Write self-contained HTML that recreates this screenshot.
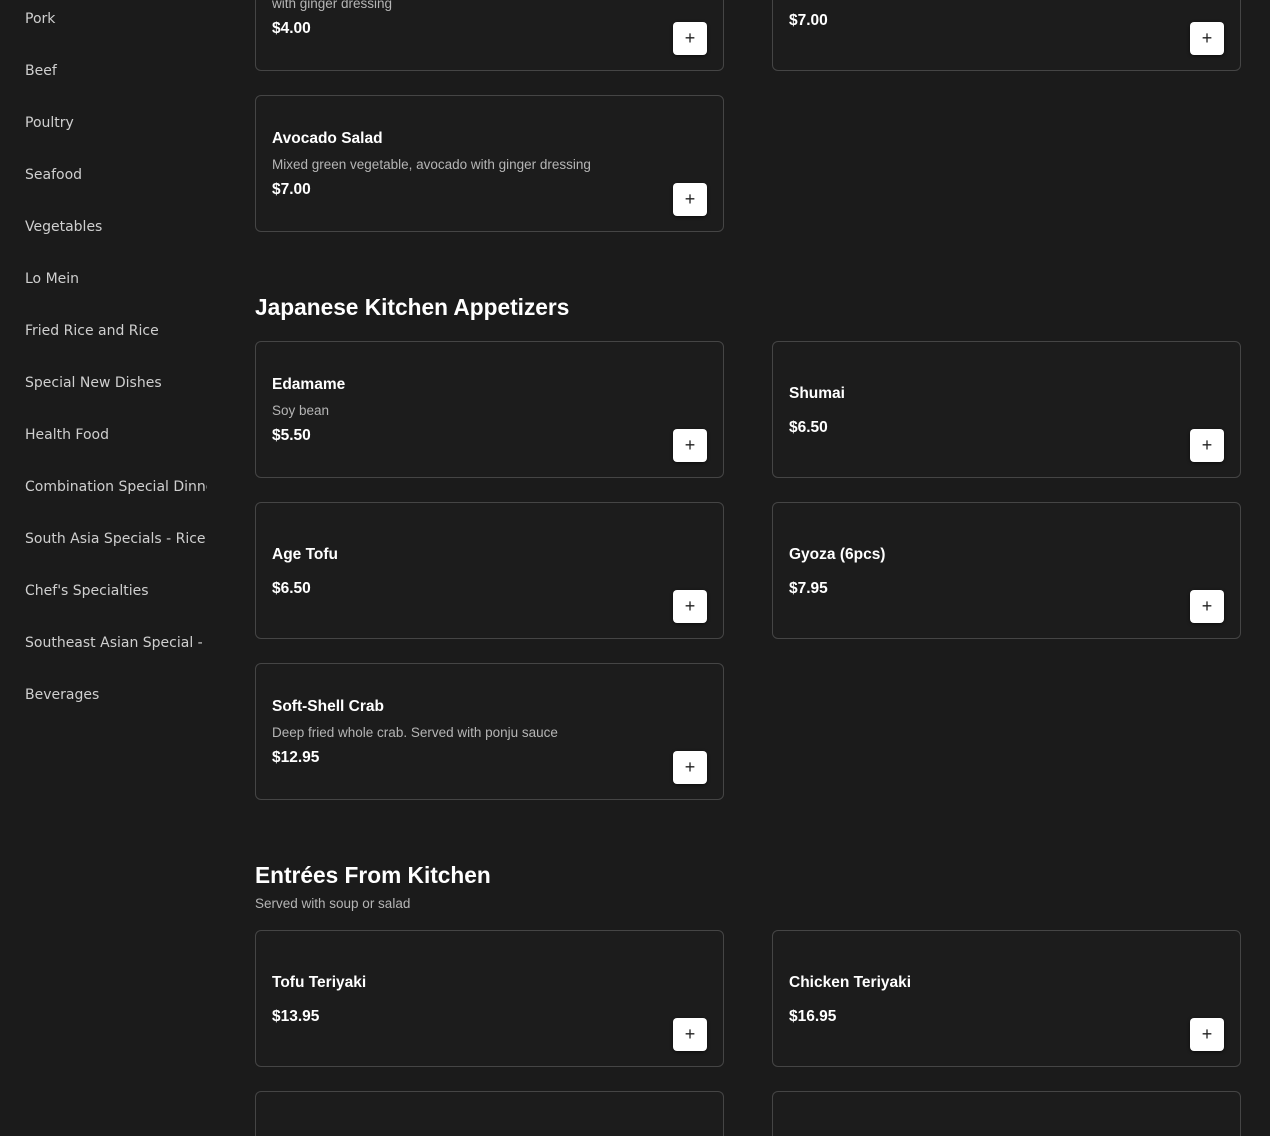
<!DOCTYPE html>
<html><head><meta charset="utf-8"><style>
*{margin:0;padding:0;box-sizing:border-box}
html,body{width:1270px;height:1136px;overflow:hidden;background:#1b1b1b;font-family:"Liberation Sans",sans-serif;color:#fff;position:relative}
.side{position:absolute;left:25px;width:182px;overflow:hidden;white-space:nowrap;font-family:"DejaVu Sans",sans-serif;font-size:14px;color:#cfcfcf;line-height:20px}
.card{position:absolute;width:469px;height:137px;border:1px solid #454545;border-radius:6px;background:#1c1c1c;display:flex;flex-direction:column;justify-content:center;padding:3px 16px 0}
.card.r{left:772px}.card.l{left:255px}
.t{font-weight:bold;font-size:15.5px;line-height:20px}
.d{font-size:13.5px;color:#b5b5b5;line-height:20px;margin-top:6px}
.p{font-weight:bold;font-size:15.5px;line-height:22px;margin-top:4px}
.p.n{margin-top:13px}
.b{position:absolute;right:16px;bottom:15px;width:34px;height:33px;background:#fff;border-radius:4px;box-shadow:0 1px 3px rgba(0,0,0,.6);color:#222;font-size:18px;line-height:33px;text-align:center}
h2{position:absolute;left:255px;font-size:22.7px;font-weight:bold;line-height:30px}
.sub{position:absolute;left:255px;font-size:13.5px;color:#b5b5b5;line-height:20px}
</style></head><body>
<div class="side" style="top:9px">Pork</div>
<div class="side" style="top:61px">Beef</div>
<div class="side" style="top:113px">Poultry</div>
<div class="side" style="top:165px">Seafood</div>
<div class="side" style="top:217px">Vegetables</div>
<div class="side" style="top:269px">Lo Mein</div>
<div class="side" style="top:321px">Fried Rice and Rice</div>
<div class="side" style="top:373px">Special New Dishes</div>
<div class="side" style="top:425px">Health Food</div>
<div class="side" style="top:477px">Combination Special Dinner</div>
<div class="side" style="top:529px">South Asia Specials - Rice</div>
<div class="side" style="top:581px">Chef's Specialties</div>
<div class="side" style="top:633px">Southeast Asian Special - </div>
<div class="side" style="top:685px">Beverages</div>

<div class="card l" style="top:-86px;height:157px"><div class="t">House Salad</div><div class="d">Mixed green vegetable<br>with ginger dressing</div><div class="p">$4.00</div><div class="b">+</div></div>
<div class="card r" style="top:-66px"><div class="t">Seaweed Salad</div><div class="p n">$7.00</div><div class="b">+</div></div>
<div class="card l" style="top:95px"><div class="t">Avocado Salad</div><div class="d">Mixed green vegetable, avocado with ginger dressing</div><div class="p">$7.00</div><div class="b">+</div></div>

<h2 style="top:292px">Japanese Kitchen Appetizers</h2>
<div class="card l" style="top:341px"><div class="t">Edamame</div><div class="d">Soy bean</div><div class="p">$5.50</div><div class="b">+</div></div>
<div class="card r" style="top:341px"><div class="t">Shumai</div><div class="p n">$6.50</div><div class="b">+</div></div>
<div class="card l" style="top:502px"><div class="t">Age Tofu</div><div class="p n">$6.50</div><div class="b">+</div></div>
<div class="card r" style="top:502px"><div class="t">Gyoza (6pcs)</div><div class="p n">$7.95</div><div class="b">+</div></div>
<div class="card l" style="top:663px"><div class="t">Soft-Shell Crab</div><div class="d">Deep fried whole crab. Served with ponju sauce</div><div class="p">$12.95</div><div class="b">+</div></div>

<h2 style="top:860px">Entrées From Kitchen</h2>
<div class="sub" style="top:894px">Served with soup or salad</div>
<div class="card l" style="top:930px"><div class="t">Tofu Teriyaki</div><div class="p n">$13.95</div><div class="b">+</div></div>
<div class="card r" style="top:930px"><div class="t">Chicken Teriyaki</div><div class="p n">$16.95</div><div class="b">+</div></div>
<div class="card l" style="top:1091px;height:60px;border-bottom:none;border-radius:6px 6px 0 0"></div>
<div class="card r" style="top:1091px;height:60px;border-bottom:none;border-radius:6px 6px 0 0"></div>
</body></html>
